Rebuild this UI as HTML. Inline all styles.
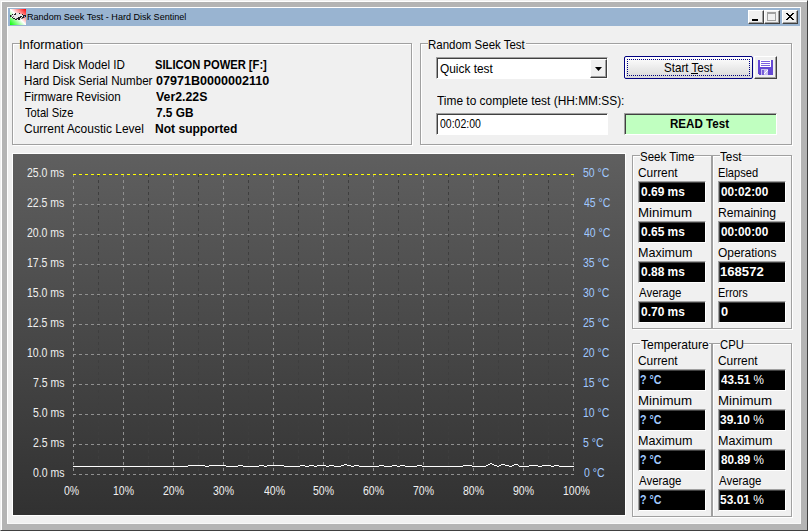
<!DOCTYPE html>
<html><head><meta charset="utf-8"><style>
*{margin:0;padding:0;box-sizing:border-box}
html,body{width:808px;height:531px;overflow:hidden;background:#f0f0f0}
body{position:relative;font-family:"Liberation Sans", sans-serif;font-size:12.8px;color:#000}
.a{position:absolute}
.t{position:absolute;white-space:nowrap;line-height:20px;transform-origin:0 0}
.gb{position:absolute;border:1px solid #a0a0a0;box-shadow:1px 1px 0 #fff, inset 1px 1px 0 #fff}
.gap{position:absolute;height:3px;background:#f0f0f0}
.tb{position:absolute;top:10px;width:16px;height:14px;background:#f0f0f0;border-top:1px solid #fff;border-left:1px solid #fff;border-right:1px solid #404040;border-bottom:1px solid #404040;box-shadow:inset -1px -1px 0 #a0a0a0}
</style></head><body>
<div class="a" style="left:0;top:0;width:808px;height:531px;border-top:1px solid #f0f0f0;border-left:1px solid #f0f0f0;border-right:1px solid #404040;border-bottom:1px solid #404040"></div>
<div class="a" style="left:1px;top:1px;width:806px;height:529px;border-top:1px solid #fff;border-left:1px solid #fff"></div>
<div class="a" style="left:2px;top:2px;width:805px;height:528px;border:5px solid #b4b4b4;border-right-width:6px;border-bottom-width:6px"></div>
<div class="a" style="left:7px;top:7px;width:794px;height:517px;border-top:1px solid #fff;border-left:1px solid #fff;border-right:1px solid #f8f8f8;border-bottom:1px solid #f8f8f8"></div>
<div class="a" style="left:8px;top:8px;width:792px;height:18px;background:#99b4d1"></div>
<div class="a" style="left:10px;top:9px;width:16px;height:16px;background:linear-gradient(to top right,#00ff00 0%,#ffffff 50%,#ff0000 100%)"></div>
<svg class="a" style="left:10px;top:9px" width="16" height="16" shape-rendering="crispEdges">
<path d="M5 4h5v1h-5z M2 5h11v1h-11z M0 6h16v1h-16z M0 7h16v1h-16z M1 8h14v1h-14z M3 9h10v1h-10z M5 10h6v1h-6z" fill="#e8e8e8"/>
<path d="M5 4h1v1h-1z M9 4h1v1h-1z M2 5h1v1h-1z M4 5h2v1h-2z M12 5h1v1h-1z M0 6h1v2h-1z M13 6h3v1h-3z M10 7h2v1h-2z M13 7h1v1h-1z M15 7h1v1h-1z M2 8h1v1h-1z M8 8h3v1h-3z M12 8h2v1h-2z M3 9h2v1h-2z M7 9h3v1h-3z M5 10h2v1h-2z M8 10h2v1h-2z" fill="#202020"/>
<path d="M1 6h1v2h-1z M3 7h1v1h-1z M6 9h1v1h-1z M11 9h2v1h-2z M14 8h1v1h-1z" fill="#808080"/>
<path d="M14 7h1v1h-1z" fill="#a090e0"/>
</svg>
<div class="tb" style="left:748px"><div class="a" style="left:3px;top:8px;width:6px;height:2px;background:#000"></div></div>
<div class="tb" style="left:764px"><div class="a" style="left:2px;top:1px;width:9px;height:9px;border:1px solid #a0a0a0;border-top-width:2px"></div></div>
<div class="tb" style="left:782px"><svg class="a" style="left:3px;top:2px" width="8" height="7" shape-rendering="crispEdges"><path d="M0 0h2v1h-2z M6 0h2v1h-2z M1 1h2v1h-2z M5 1h2v1h-2z M2 2h4v1h-4z M3 3h2v1h-2z M2 4h4v1h-4z M1 5h2v1h-2z M5 5h2v1h-2z M0 6h2v1h-2z M6 6h2v1h-2z" fill="#000"/></svg></div>

<div class="gb" style="left:12px;top:43px;width:400px;height:102px"></div>
<div class="gap" style="left:20px;top:42px;width:63px"></div>
<div class="gb" style="left:420px;top:43px;width:372px;height:102px"></div>
<div class="gap" style="left:428px;top:42px;width:98px"></div>

<div class="a" style="left:436px;top:57px;width:172px;height:22px;background:#fff;border-top:1px solid #a0a0a0;border-left:1px solid #a0a0a0;border-right:1px solid #fff;border-bottom:1px solid #fff;box-shadow:inset 1px 1px 0 #404040"></div>
<div class="a" style="left:590px;top:59px;width:17px;height:19px;background:#f0f0f0;border-top:1px solid #fff;border-left:1px solid #fff;border-right:1px solid #404040;border-bottom:1px solid #404040;box-shadow:inset -1px -1px 0 #a0a0a0"></div>
<svg class="a" style="left:595px;top:67px" width="7" height="4"><path d="M0 0 H7 L3.5 4 Z" fill="#000"/></svg>
<div class="a" style="left:436px;top:113px;width:172px;height:22px;background:#fff;border-top:1px solid #a0a0a0;border-left:1px solid #a0a0a0;border-right:1px solid #fff;border-bottom:1px solid #fff;box-shadow:inset 1px 1px 0 #404040"></div>

<div class="a" style="left:624px;top:56px;width:129px;height:23px;border:1px solid #000080;border-radius:2px;background:linear-gradient(#ffffff,#d8d8d8);box-shadow:inset 1px 1px 0 #fff"></div>
<div class="a" style="left:627px;top:59px;width:123px;height:17px;border:1px dotted #000080"></div>
<div class="a" style="left:691px;top:73px;width:7px;height:1px;background:#000"></div>

<div class="a" style="left:754px;top:56px;width:23px;height:23px;background:#f0f0f0;border-top:1px solid #fff;border-left:1px solid #fff;border-right:1px solid #404040;border-bottom:1px solid #404040;box-shadow:inset -1px -1px 0 #a0a0a0"></div>
<svg class="a" style="left:758px;top:60px" width="15" height="16" viewBox="0 0 15 16" shape-rendering="crispEdges">
<path d="M0 0 H2 V7 H13 V0 H15 V14 L14 15 H1 L0 14 Z" fill="#6448d4"/>
<rect x="2" y="0" width="11" height="7" fill="#fff"/>
<rect x="3" y="1" width="9" height="1" fill="#7a60e0"/><rect x="3" y="3" width="9" height="1" fill="#7a60e0"/><rect x="3" y="5" width="9" height="1" fill="#7a60e0"/>
<rect x="3" y="9" width="7" height="6" fill="#c8c0f0"/><rect x="4" y="10" width="2" height="5" fill="#7860d8"/><path d="M9 10h1v1h-1z M8 11h1v1h-1z M7 12h1v1h-1z M6 13h1v1h-1z" fill="#ffffff"/>
</svg>
<div class="a" style="left:624px;top:113px;width:153px;height:22px;background:#c0ffc0;border-top:1px solid #a0a0a0;border-left:1px solid #a0a0a0;border-right:1px solid #fff;border-bottom:1px solid #fff;box-shadow:inset 1px 1px 0 #404040"></div>

<div class="a" style="left:12px;top:153px;width:614px;height:363px;border:1px solid #fff;background:linear-gradient(#5f5f5f,#313131)"></div>
<svg width="612" height="361" style="position:absolute;left:13px;top:154px" shape-rendering="crispEdges"><line x1="60.5" y1="20" x2="60.5" y2="321" stroke="#909090" stroke-dasharray="3 3"/><line x1="85.5" y1="20" x2="85.5" y2="321" stroke="#3e3e3e" stroke-dasharray="3 3"/><line x1="110.5" y1="20" x2="110.5" y2="321" stroke="#909090" stroke-dasharray="3 3"/><line x1="135.5" y1="20" x2="135.5" y2="321" stroke="#3e3e3e" stroke-dasharray="3 3"/><line x1="160.5" y1="20" x2="160.5" y2="321" stroke="#909090" stroke-dasharray="3 3"/><line x1="185.5" y1="20" x2="185.5" y2="321" stroke="#3e3e3e" stroke-dasharray="3 3"/><line x1="210.5" y1="20" x2="210.5" y2="321" stroke="#909090" stroke-dasharray="3 3"/><line x1="235.5" y1="20" x2="235.5" y2="321" stroke="#3e3e3e" stroke-dasharray="3 3"/><line x1="260.5" y1="20" x2="260.5" y2="321" stroke="#909090" stroke-dasharray="3 3"/><line x1="285.5" y1="20" x2="285.5" y2="321" stroke="#3e3e3e" stroke-dasharray="3 3"/><line x1="310.5" y1="20" x2="310.5" y2="321" stroke="#909090" stroke-dasharray="3 3"/><line x1="335.5" y1="20" x2="335.5" y2="321" stroke="#3e3e3e" stroke-dasharray="3 3"/><line x1="360.5" y1="20" x2="360.5" y2="321" stroke="#909090" stroke-dasharray="3 3"/><line x1="385.5" y1="20" x2="385.5" y2="321" stroke="#3e3e3e" stroke-dasharray="3 3"/><line x1="410.5" y1="20" x2="410.5" y2="321" stroke="#909090" stroke-dasharray="3 3"/><line x1="435.5" y1="20" x2="435.5" y2="321" stroke="#3e3e3e" stroke-dasharray="3 3"/><line x1="460.5" y1="20" x2="460.5" y2="321" stroke="#909090" stroke-dasharray="3 3"/><line x1="485.5" y1="20" x2="485.5" y2="321" stroke="#3e3e3e" stroke-dasharray="3 3"/><line x1="510.5" y1="20" x2="510.5" y2="321" stroke="#909090" stroke-dasharray="3 3"/><line x1="535.5" y1="20" x2="535.5" y2="321" stroke="#3e3e3e" stroke-dasharray="3 3"/><line x1="560.5" y1="20" x2="560.5" y2="321" stroke="#909090" stroke-dasharray="3 3"/><line x1="60" y1="50.5" x2="561" y2="50.5" stroke="#909090" stroke-dasharray="3 3"/><line x1="60" y1="80.5" x2="561" y2="80.5" stroke="#909090" stroke-dasharray="3 3"/><line x1="60" y1="110.5" x2="561" y2="110.5" stroke="#909090" stroke-dasharray="3 3"/><line x1="60" y1="140.5" x2="561" y2="140.5" stroke="#909090" stroke-dasharray="3 3"/><line x1="60" y1="170.5" x2="561" y2="170.5" stroke="#909090" stroke-dasharray="3 3"/><line x1="60" y1="200.5" x2="561" y2="200.5" stroke="#909090" stroke-dasharray="3 3"/><line x1="60" y1="230.5" x2="561" y2="230.5" stroke="#909090" stroke-dasharray="3 3"/><line x1="60" y1="260.5" x2="561" y2="260.5" stroke="#909090" stroke-dasharray="3 3"/><line x1="60" y1="290.5" x2="561" y2="290.5" stroke="#909090" stroke-dasharray="3 3"/><line x1="60" y1="320.5" x2="561" y2="320.5" stroke="#909090" stroke-dasharray="3 3"/><line x1="60" y1="20.5" x2="561" y2="20.5" stroke="#ffff00" stroke-dasharray="3 3"/><path d="M60 312h115v1h-115zM175 311h17v1h-17zM192 312h4v1h-4zM196 311h17v1h-17zM213 312h12v1h-12zM225 311h5v1h-5zM230 312h16v1h-16zM246 311h5v1h-5zM251 312h3v1h-3zM254 311h17v1h-17zM271 312h16v1h-16zM287 311h5v1h-5zM292 312h4v1h-4zM296 311h5v1h-5zM301 312h3v1h-3zM304 311h9v1h-9zM313 312h3v1h-3zM316 311h5v1h-5zM321 312h7v1h-7zM328 311h3v1h-3zM331 310h3v1h-3zM334 311h4v1h-4zM338 312h3v1h-3zM341 311h5v1h-5zM346 312h20v1h-20zM366 311h5v1h-5zM371 312h8v1h-8zM379 311h5v1h-5zM384 312h3v1h-3zM387 311h5v1h-5zM392 312h12v1h-12zM404 311h5v1h-5zM409 312h41v1h-41zM450 311h9v1h-9zM459 312h14v1h-14zM473 311h2v1h-2zM475 310h2v1h-2zM477 309h2v1h-2zM479 310h2v1h-2zM481 311h3v1h-3zM484 312h2v1h-2zM486 311h2v1h-2zM488 310h4v1h-4zM492 311h4v1h-4zM496 312h3v1h-3zM499 311h2v1h-2zM501 310h4v1h-4zM505 311h1v1h-1zM506 312h10v1h-10zM516 311h9v1h-9zM525 312h4v1h-4zM529 311h9v1h-9zM538 312h3v1h-3zM541 311h5v1h-5zM546 312h15v1h-15z" fill="#ffffff"/></svg>

<div class="gb" style="left:632px;top:155px;width:80px;height:174px"></div>
<div class="gb" style="left:712px;top:155px;width:80px;height:174px"></div>
<div class="gb" style="left:632px;top:343px;width:80px;height:174px"></div>
<div class="gb" style="left:712px;top:343px;width:80px;height:174px"></div>
<div class="gap" style="left:640px;top:154px;width:54px"></div>
<div class="gap" style="left:720px;top:154px;width:22px"></div>
<div class="gap" style="left:640px;top:342px;width:69px"></div>
<div class="gap" style="left:720px;top:342px;width:23px"></div>
<div class="a" style="left:638px;top:181px;width:68px;height:22px;background:#000;border-top:1px solid #a0a0a0;border-left:1px solid #a0a0a0;border-right:1px solid #fff;border-bottom:1px solid #fff;box-shadow:inset 1px 1px 0 #404040"></div><div class="a" style="left:638px;top:221px;width:68px;height:22px;background:#000;border-top:1px solid #a0a0a0;border-left:1px solid #a0a0a0;border-right:1px solid #fff;border-bottom:1px solid #fff;box-shadow:inset 1px 1px 0 #404040"></div><div class="a" style="left:638px;top:261px;width:68px;height:22px;background:#000;border-top:1px solid #a0a0a0;border-left:1px solid #a0a0a0;border-right:1px solid #fff;border-bottom:1px solid #fff;box-shadow:inset 1px 1px 0 #404040"></div><div class="a" style="left:638px;top:301px;width:68px;height:22px;background:#000;border-top:1px solid #a0a0a0;border-left:1px solid #a0a0a0;border-right:1px solid #fff;border-bottom:1px solid #fff;box-shadow:inset 1px 1px 0 #404040"></div><div class="a" style="left:638px;top:369px;width:68px;height:22px;background:#000;border-top:1px solid #a0a0a0;border-left:1px solid #a0a0a0;border-right:1px solid #fff;border-bottom:1px solid #fff;box-shadow:inset 1px 1px 0 #404040"></div><div class="a" style="left:638px;top:409px;width:68px;height:22px;background:#000;border-top:1px solid #a0a0a0;border-left:1px solid #a0a0a0;border-right:1px solid #fff;border-bottom:1px solid #fff;box-shadow:inset 1px 1px 0 #404040"></div><div class="a" style="left:638px;top:449px;width:68px;height:22px;background:#000;border-top:1px solid #a0a0a0;border-left:1px solid #a0a0a0;border-right:1px solid #fff;border-bottom:1px solid #fff;box-shadow:inset 1px 1px 0 #404040"></div><div class="a" style="left:638px;top:489px;width:68px;height:22px;background:#000;border-top:1px solid #a0a0a0;border-left:1px solid #a0a0a0;border-right:1px solid #fff;border-bottom:1px solid #fff;box-shadow:inset 1px 1px 0 #404040"></div><div class="a" style="left:718px;top:181px;width:68px;height:22px;background:#000;border-top:1px solid #a0a0a0;border-left:1px solid #a0a0a0;border-right:1px solid #fff;border-bottom:1px solid #fff;box-shadow:inset 1px 1px 0 #404040"></div><div class="a" style="left:718px;top:221px;width:68px;height:22px;background:#000;border-top:1px solid #a0a0a0;border-left:1px solid #a0a0a0;border-right:1px solid #fff;border-bottom:1px solid #fff;box-shadow:inset 1px 1px 0 #404040"></div><div class="a" style="left:718px;top:261px;width:68px;height:22px;background:#000;border-top:1px solid #a0a0a0;border-left:1px solid #a0a0a0;border-right:1px solid #fff;border-bottom:1px solid #fff;box-shadow:inset 1px 1px 0 #404040"></div><div class="a" style="left:718px;top:301px;width:68px;height:22px;background:#000;border-top:1px solid #a0a0a0;border-left:1px solid #a0a0a0;border-right:1px solid #fff;border-bottom:1px solid #fff;box-shadow:inset 1px 1px 0 #404040"></div><div class="a" style="left:718px;top:369px;width:68px;height:22px;background:#000;border-top:1px solid #a0a0a0;border-left:1px solid #a0a0a0;border-right:1px solid #fff;border-bottom:1px solid #fff;box-shadow:inset 1px 1px 0 #404040"></div><div class="a" style="left:718px;top:409px;width:68px;height:22px;background:#000;border-top:1px solid #a0a0a0;border-left:1px solid #a0a0a0;border-right:1px solid #fff;border-bottom:1px solid #fff;box-shadow:inset 1px 1px 0 #404040"></div><div class="a" style="left:718px;top:449px;width:68px;height:22px;background:#000;border-top:1px solid #a0a0a0;border-left:1px solid #a0a0a0;border-right:1px solid #fff;border-bottom:1px solid #fff;box-shadow:inset 1px 1px 0 #404040"></div><div class="a" style="left:718px;top:489px;width:68px;height:22px;background:#000;border-top:1px solid #a0a0a0;border-left:1px solid #a0a0a0;border-right:1px solid #fff;border-bottom:1px solid #fff;box-shadow:inset 1px 1px 0 #404040"></div>
<div class="t" style="left:27.08px;top:7.00px;font-size:9.8px;transform:scaleX(0.9240)">Random Seek Test - Hard Disk Sentinel</div>
<div class="t" style="left:19.00px;top:35.00px;transform:scaleX(1.0000)">Information</div>
<div class="t" style="left:24.09px;top:55.00px;transform:scaleX(0.9091)">Hard Disk Model ID</div>
<div class="t" style="left:155.13px;top:55.00px;font-weight:700;transform:scaleX(0.8740)">SILICON POWER [F:]</div>
<div class="t" style="left:24.09px;top:71.00px;transform:scaleX(0.9078)">Hard Disk Serial Number</div>
<div class="t" style="left:156.00px;top:71.00px;font-weight:700;transform:scaleX(0.9826)">07971B0000002110</div>
<div class="t" style="left:24.09px;top:87.00px;transform:scaleX(0.9135)">Firmware Revision</div>
<div class="t" style="left:156.00px;top:87.00px;font-weight:700;transform:scaleX(0.9623)">Ver2.22S</div>
<div class="t" style="left:25.00px;top:103.00px;transform:scaleX(0.8727)">Total Size</div>
<div class="t" style="left:156.00px;top:103.00px;font-weight:700;transform:scaleX(0.9250)">7.5 GB</div>
<div class="t" style="left:24.06px;top:119.00px;transform:scaleX(0.9365)">Current Acoustic Level</div>
<div class="t" style="left:155.06px;top:119.00px;font-weight:700;transform:scaleX(0.9419)">Not supported</div>
<div class="t" style="left:428.10px;top:35.00px;transform:scaleX(0.8972)">Random Seek Test</div>
<div class="t" style="left:440.07px;top:59.00px;transform:scaleX(0.9286)">Quick test</div>
<div class="t" style="left:437.00px;top:91.00px;transform:scaleX(0.9303)">Time to complete test (HH:MM:SS):</div>
<div class="t" style="left:440.00px;top:114.00px;transform:scaleX(0.8200)">00:02:00</div>
<div class="t" style="left:664.09px;top:58.00px;transform:scaleX(0.9057)">Start Test</div>
<div class="t" style="left:670.09px;top:114.00px;font-weight:700;transform:scaleX(0.9062)">READ Test</div>
<div class="t" style="left:27.10px;top:163.00px;color:#f0f0f0;transform:scaleX(0.8200)">25.0 ms</div>
<div class="t" style="left:583.18px;top:163.00px;color:#a0c8ff;transform:scaleX(0.8200)">50 °C</div>
<div class="t" style="left:27.10px;top:193.00px;color:#f0f0f0;transform:scaleX(0.8200)">22.5 ms</div>
<div class="t" style="left:584.00px;top:193.00px;color:#a0c8ff;transform:scaleX(0.8200)">45 °C</div>
<div class="t" style="left:27.10px;top:223.00px;color:#f0f0f0;transform:scaleX(0.8200)">20.0 ms</div>
<div class="t" style="left:584.00px;top:223.00px;color:#a0c8ff;transform:scaleX(0.8200)">40 °C</div>
<div class="t" style="left:27.10px;top:253.00px;color:#f0f0f0;transform:scaleX(0.8200)">17.5 ms</div>
<div class="t" style="left:583.18px;top:253.00px;color:#a0c8ff;transform:scaleX(0.8200)">35 °C</div>
<div class="t" style="left:27.10px;top:283.00px;color:#f0f0f0;transform:scaleX(0.8200)">15.0 ms</div>
<div class="t" style="left:583.18px;top:283.00px;color:#a0c8ff;transform:scaleX(0.8200)">30 °C</div>
<div class="t" style="left:27.10px;top:313.00px;color:#f0f0f0;transform:scaleX(0.8200)">12.5 ms</div>
<div class="t" style="left:583.18px;top:313.00px;color:#a0c8ff;transform:scaleX(0.8200)">25 °C</div>
<div class="t" style="left:27.10px;top:343.00px;color:#f0f0f0;transform:scaleX(0.8200)">10.0 ms</div>
<div class="t" style="left:583.18px;top:343.00px;color:#a0c8ff;transform:scaleX(0.8200)">20 °C</div>
<div class="t" style="left:32.84px;top:373.00px;color:#f0f0f0;transform:scaleX(0.8200)">7.5 ms</div>
<div class="t" style="left:583.18px;top:373.00px;color:#a0c8ff;transform:scaleX(0.8200)">15 °C</div>
<div class="t" style="left:32.84px;top:403.00px;color:#f0f0f0;transform:scaleX(0.8200)">5.0 ms</div>
<div class="t" style="left:583.18px;top:403.00px;color:#a0c8ff;transform:scaleX(0.8200)">10 °C</div>
<div class="t" style="left:32.84px;top:433.00px;color:#f0f0f0;transform:scaleX(0.8200)">2.5 ms</div>
<div class="t" style="left:583.18px;top:433.00px;color:#a0c8ff;transform:scaleX(0.8200)">5 °C</div>
<div class="t" style="left:32.84px;top:463.00px;color:#f0f0f0;transform:scaleX(0.8200)">0.0 ms</div>
<div class="t" style="left:584.00px;top:463.00px;color:#a0c8ff;transform:scaleX(0.8200)">0 °C</div>
<div class="t" style="left:64.00px;top:481.00px;color:#f0f0f0;transform:scaleX(0.8200)">0%</div>
<div class="t" style="left:113.18px;top:481.00px;color:#f0f0f0;transform:scaleX(0.8200)">10%</div>
<div class="t" style="left:163.18px;top:481.00px;color:#f0f0f0;transform:scaleX(0.8200)">20%</div>
<div class="t" style="left:213.18px;top:481.00px;color:#f0f0f0;transform:scaleX(0.8200)">30%</div>
<div class="t" style="left:264.00px;top:481.00px;color:#f0f0f0;transform:scaleX(0.8200)">40%</div>
<div class="t" style="left:313.18px;top:481.00px;color:#f0f0f0;transform:scaleX(0.8200)">50%</div>
<div class="t" style="left:363.18px;top:481.00px;color:#f0f0f0;transform:scaleX(0.8200)">60%</div>
<div class="t" style="left:413.18px;top:481.00px;color:#f0f0f0;transform:scaleX(0.8200)">70%</div>
<div class="t" style="left:463.18px;top:481.00px;color:#f0f0f0;transform:scaleX(0.8200)">80%</div>
<div class="t" style="left:513.18px;top:481.00px;color:#f0f0f0;transform:scaleX(0.8200)">90%</div>
<div class="t" style="left:563.18px;top:481.00px;color:#f0f0f0;transform:scaleX(0.8200)">100%</div>
<div class="t" style="left:640.10px;top:147.00px;transform:scaleX(0.8983)">Seek Time</div>
<div class="t" style="left:720.00px;top:147.00px;transform:scaleX(0.9167)">Test</div>
<div class="t" style="left:641.00px;top:335.00px;transform:scaleX(0.9437)">Temperature</div>
<div class="t" style="left:720.12px;top:335.00px;transform:scaleX(0.8800)">CPU</div>
<div class="t" style="left:638.07px;top:163.00px;transform:scaleX(0.9286)">Current</div>
<div class="t" style="left:718.13px;top:163.00px;transform:scaleX(0.8667)">Elapsed</div>
<div class="t" style="left:638.07px;top:351.00px;transform:scaleX(0.9286)">Current</div>
<div class="t" style="left:718.07px;top:351.00px;transform:scaleX(0.9286)">Current</div>
<div class="t" style="left:637.96px;top:203.00px;transform:scaleX(1.0400)">Minimum</div>
<div class="t" style="left:718.05px;top:203.00px;transform:scaleX(0.9492)">Remaining</div>
<div class="t" style="left:637.96px;top:391.00px;transform:scaleX(1.0400)">Minimum</div>
<div class="t" style="left:717.96px;top:391.00px;transform:scaleX(1.0400)">Minimum</div>
<div class="t" style="left:638.02px;top:243.00px;transform:scaleX(0.9815)">Maximum</div>
<div class="t" style="left:718.07px;top:243.00px;transform:scaleX(0.9344)">Operations</div>
<div class="t" style="left:638.02px;top:431.00px;transform:scaleX(0.9815)">Maximum</div>
<div class="t" style="left:718.02px;top:431.00px;transform:scaleX(0.9815)">Maximum</div>
<div class="t" style="left:639.00px;top:283.00px;transform:scaleX(0.8936)">Average</div>
<div class="t" style="left:718.15px;top:283.00px;transform:scaleX(0.8529)">Errors</div>
<div class="t" style="left:639.00px;top:471.00px;transform:scaleX(0.8936)">Average</div>
<div class="t" style="left:719.00px;top:471.00px;transform:scaleX(0.8936)">Average</div>
<div class="t" style="left:641.00px;top:182.00px;font-weight:700;color:#fff;transform:scaleX(0.9348)">0.69 ms</div>
<div class="t" style="left:721.00px;top:182.00px;font-weight:700;color:#fff;transform:scaleX(0.9216)">00:02:00</div>
<div class="t" style="left:640.17px;top:370.00px;font-weight:700;color:#a0c8ff;transform:scaleX(0.8333)">? °C</div>
<div class="t" style="left:721.00px;top:370.00px;font-weight:700;color:#fff;transform:scaleX(0.9149)">43.51 <span style="font-weight:400">%</span></div>
<div class="t" style="left:641.00px;top:222.00px;font-weight:700;color:#fff;transform:scaleX(0.9348)">0.65 ms</div>
<div class="t" style="left:721.00px;top:222.00px;font-weight:700;color:#fff;transform:scaleX(0.9216)">00:00:00</div>
<div class="t" style="left:640.17px;top:410.00px;font-weight:700;color:#a0c8ff;transform:scaleX(0.8333)">? °C</div>
<div class="t" style="left:720.07px;top:410.00px;font-weight:700;color:#fff;transform:scaleX(0.9348)">39.10 <span style="font-weight:400">%</span></div>
<div class="t" style="left:641.00px;top:262.00px;font-weight:700;color:#fff;transform:scaleX(0.9348)">0.88 ms</div>
<div class="t" style="left:719.98px;top:262.00px;font-weight:700;color:#fff;transform:scaleX(1.0244)">168572</div>
<div class="t" style="left:640.17px;top:450.00px;font-weight:700;color:#a0c8ff;transform:scaleX(0.8333)">? °C</div>
<div class="t" style="left:721.00px;top:450.00px;font-weight:700;color:#fff;transform:scaleX(0.9149)">80.89 <span style="font-weight:400">%</span></div>
<div class="t" style="left:641.00px;top:302.00px;font-weight:700;color:#fff;transform:scaleX(0.9348)">0.70 ms</div>
<div class="t" style="left:721.00px;top:302.00px;font-weight:700;color:#fff;transform:scaleX(1.0000)">0</div>
<div class="t" style="left:640.17px;top:490.00px;font-weight:700;color:#a0c8ff;transform:scaleX(0.8333)">? °C</div>
<div class="t" style="left:720.07px;top:490.00px;font-weight:700;color:#fff;transform:scaleX(0.9348)">53.01 <span style="font-weight:400">%</span></div>
</body></html>
